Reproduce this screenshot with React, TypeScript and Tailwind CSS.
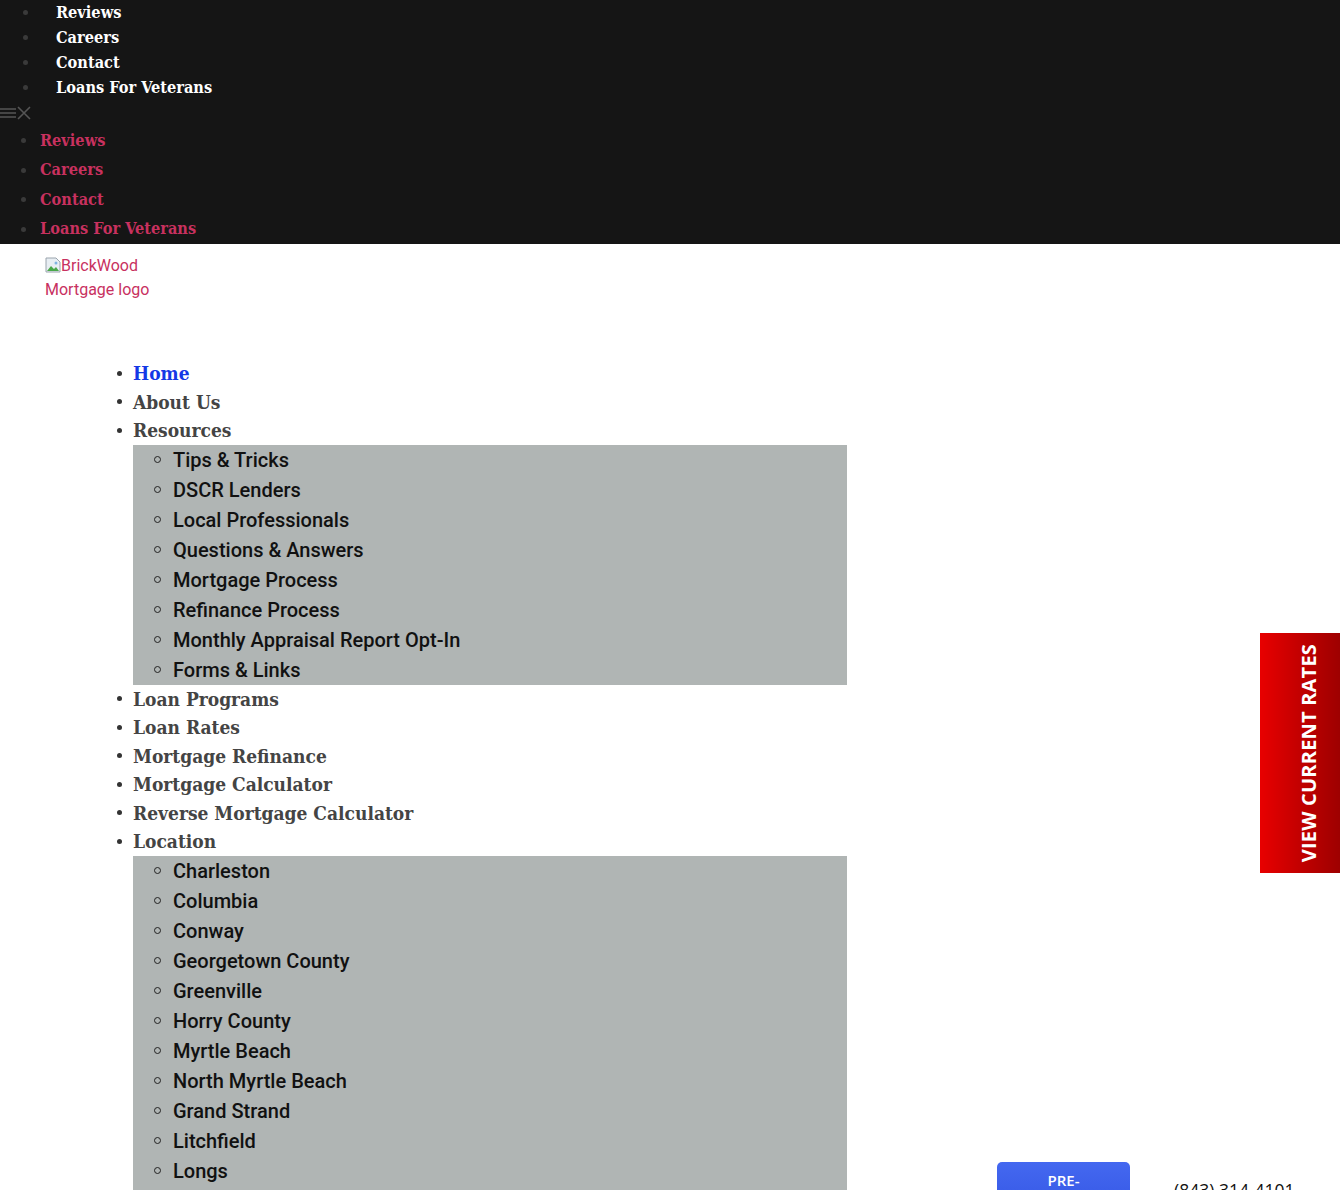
const serif = "font-['DejaVu_Serif_Condensed','DejaVu_Serif',serif] font-stretch-condensed font-bold";

const topLinks = ["Reviews", "Careers", "Contact", "Loans For Veterans"];

const resources = [
  "Tips & Tricks",
  "DSCR Lenders",
  "Local Professionals",
  "Questions & Answers",
  "Mortgage Process",
  "Refinance Process",
  "Monthly Appraisal Report Opt-In",
  "Forms & Links",
];

const locations = [
  "Charleston",
  "Columbia",
  "Conway",
  "Georgetown County",
  "Greenville",
  "Horry County",
  "Myrtle Beach",
  "North Myrtle Beach",
  "Grand Strand",
  "Litchfield",
  "Longs",
  "Murrells Inlet",
  "Pawleys Island",
];

function SubMenu({ items }: { items: string[] }) {
  return (
    <ul className="w-[714px] bg-[#b0b5b4]">
      {items.map((t) => (
        <li key={t} className="flex h-[30px] items-center">
          <span className="ml-[21px] mr-[12px] h-[7px] w-[7px] rounded-full border border-[#222]" />
          <a className="pt-[1px] font-['Roboto',sans-serif] text-[20px] font-medium text-[#111]">{t}</a>
        </li>
      ))}
    </ul>
  );
}

function NavItem({ label, active, children }: { label: string; active?: boolean; children?: React.ReactNode }) {
  return (
    <li>
      <div className="flex h-[28.5px] items-center">
        <span className="ml-[117px] mr-[11px] h-[5px] w-[5px] rounded-full bg-[#333]" />
        <a className={`${serif} text-[19px] ${active ? "text-[#1438e6]" : "text-[#444]"}`}>{label}</a>
      </div>
      {children && <div className="ml-[133px]">{children}</div>}
    </li>
  );
}

export default function App() {
  return (
    <div className="relative min-h-[1190px] bg-white">
      <header className="bg-[#151515]">
        <ul>
          {topLinks.map((t) => (
            <li key={t} className="flex h-[25px] items-center">
              <span className="ml-[23px] mr-[28px] h-[5px] w-[5px] rounded-full bg-[#3a3a3a]" />
              <a className={`${serif} pt-[2px] text-[16.2px] text-white`}>{t}</a>
            </li>
          ))}
        </ul>
        <div className="flex h-[26px] items-center text-[#555]">
          <svg width="16" height="12" viewBox="0 0 16 12" className="mt-[-1px]">
            <path d="M0 2h16M0 6h16M0 10h16" stroke="currentColor" strokeWidth="1.6" />
          </svg>
          <svg width="14" height="14" viewBox="0 0 14 14" className="ml-[1px] mt-[-1px]">
            <path d="M1 1l12 12M13 1L1 13" stroke="currentColor" strokeWidth="1.6" />
          </svg>
        </div>
        <ul>
          {topLinks.map((t) => (
            <li key={t} className="flex h-[29.5px] items-center">
              <span className="ml-[21px] mr-[14px] h-[5px] w-[5px] rounded-full bg-[#3a3a3a]" />
              <a className={`${serif} text-[16.2px] text-[#c8315f]`}>{t}</a>
            </li>
          ))}
        </ul>
      </header>

      <div className="flex">
        <div className="w-[847px] shrink-0">
          <div className="ml-[45px] pt-[10px]">
            <span className="inline-block w-[120px] font-['Roboto',sans-serif] text-[16px] leading-[24px] text-[#c8315f]">
              <svg width="16" height="16" viewBox="0 0 16 16" className="inline-block align-[-2px]">
                <path d="M1 1h10l4 4v10H1z" fill="#e8eef3" stroke="#9aa4ad" strokeWidth="1" />
                <path d="M2 14l4-5 3 3 2-2 3 4z" fill="#4aa84a" />
                <circle cx="11" cy="6" r="1.5" fill="#7fb3e0" />
              </svg>
              BrickWood Mortgage logo
            </span>
          </div>
          <ul className="mt-[57px]">
            <NavItem label="Home" active />
            <NavItem label="About Us" />
            <NavItem label="Resources">
              <SubMenu items={resources} />
            </NavItem>
            <NavItem label="Loan Programs" />
            <NavItem label="Loan Rates" />
            <NavItem label="Mortgage Refinance" />
            <NavItem label="Mortgage Calculator" />
            <NavItem label="Reverse Mortgage Calculator" />
            <NavItem label="Location">
              <SubMenu items={locations} />
            </NavItem>
          </ul>
        </div>

        <div className="ml-[150px] mt-[918px] flex items-start">
          <a className="flex h-[60px] w-[133px] justify-center rounded-t-[5px] bg-gradient-to-b from-[#4468f0] to-[#3253e2] pt-[7px] font-['Open_Sans',sans-serif] text-[15px] font-semibold text-white">
            PRE-
          </a>
          <span className="ml-[44px] mt-[15px] font-['Open_Sans',sans-serif] text-[17.5px] text-[#111]">(843) 314-4101</span>
        </div>
      </div>

      <a className="fixed right-0 top-[633px] flex h-[240px] w-[80px] items-center justify-center bg-gradient-to-r from-[#e80000] to-[#9e0000] pl-[18px]">
        <span className="rotate-180 font-['Open_Sans',sans-serif] text-[20px] font-bold tracking-[0.2px] text-white [writing-mode:vertical-rl]">
          VIEW CURRENT RATES
        </span>
      </a>
    </div>
  );
}
